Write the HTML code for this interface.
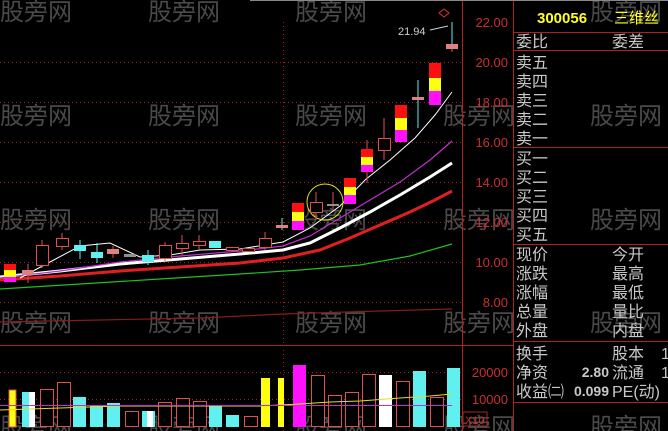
<!DOCTYPE html>
<html><head><meta charset="utf-8"><style>
html,body{margin:0;padding:0;background:#000;width:668px;height:431px;overflow:hidden}
svg{display:block}
text{font-family:"Liberation Sans","Noto Sans CJK SC",sans-serif}
.wm{fill:#4a4a4a;font-size:24px}
.ax{fill:#c83030;font-size:13px}
.lb{fill:#c8c8c8;font-size:16px}
</style></head><body>
<svg width="668" height="431" viewBox="0 0 668 431">
<rect width="668" height="431" fill="#000"/>
<!-- watermarks -->
<g class="wm">
<text x="0" y="20">股旁网</text><text x="148" y="20">股旁网</text><text x="295" y="20">股旁网</text><text x="590" y="20">股旁网</text>
<text x="0" y="124">股旁网</text><text x="148" y="124">股旁网</text><text x="295" y="124">股旁网</text><text x="443" y="124">股旁网</text><text x="590" y="124">股旁网</text>
<text x="0" y="228">股旁网</text><text x="148" y="228">股旁网</text><text x="295" y="228">股旁网</text><text x="443" y="228">股旁网</text><text x="590" y="228">股旁网</text>
<text x="0" y="331">股旁网</text><text x="148" y="331">股旁网</text><text x="295" y="331">股旁网</text><text x="443" y="331">股旁网</text><text x="590" y="331">股旁网</text>
<text x="0" y="435">股旁网</text><text x="148" y="435">股旁网</text><text x="295" y="435">股旁网</text><text x="443" y="435">股旁网</text><text x="590" y="435">股旁网</text>
</g>
<!-- grid -->
<g stroke="#a02020" stroke-width="1" stroke-dasharray="1,3">
<line x1="0" y1="62.5" x2="462" y2="62.5"/><line x1="0" y1="102.5" x2="462" y2="102.5"/><line x1="0" y1="142.5" x2="462" y2="142.5"/><line x1="0" y1="182.5" x2="462" y2="182.5"/><line x1="0" y1="222.5" x2="462" y2="222.5"/><line x1="0" y1="262.5" x2="462" y2="262.5"/><line x1="0" y1="302.5" x2="462" y2="302.5"/>
<line x1="283.5" y1="22" x2="283.5" y2="345"/>
<line x1="283.5" y1="350" x2="283.5" y2="431"/>
<line x1="0" y1="372.5" x2="462" y2="372.5"/><line x1="0" y1="399.5" x2="462" y2="399.5"/>
</g>
<g stroke="#b02020" stroke-width="1" fill="none">
<line x1="462.5" y1="0" x2="462.5" y2="431"/>
<line x1="513.5" y1="0" x2="513.5" y2="431"/>
<line x1="0" y1="345.5" x2="513" y2="345.5"/>
<line x1="513" y1="32.5" x2="668" y2="32.5"/>
<line x1="513" y1="50.5" x2="668" y2="50.5"/>
<line x1="513" y1="147.5" x2="668" y2="147.5"/>
<line x1="513" y1="244.5" x2="668" y2="244.5"/>
<line x1="513" y1="341.5" x2="668" y2="341.5"/>
<line x1="513" y1="402.5" x2="668" y2="402.5"/>
<rect x="463" y="412" width="24" height="14"/>
</g>
<line x1="250" y1="0.5" x2="668" y2="0.5" stroke="#888"/>
<!-- axis labels -->
<g class="ax" text-anchor="end">
<text x="508" y="27">22.00</text><text x="508" y="67">20.00</text><text x="508" y="107">18.00</text><text x="508" y="147">16.00</text><text x="508" y="187">14.00</text><text x="508" y="227">12.00</text><text x="508" y="267">10.00</text><text x="508" y="307">8.00</text>
<text x="508" y="377">20000</text><text x="508" y="404">10000</text>
</g>
<text x="465" y="424" fill="#c83030" font-size="11">X10</text>
<!-- MA lines -->
<polyline fill="none" stroke="#8c1a1a" stroke-width="1.2" points="0,322 100,320 200,318 283,314 380,311 452,309"/>
<polyline fill="none" stroke="#20c020" stroke-width="1.2" points="0,289 80,284 160,279 240,274 300,270 360,265 410,256 452,244"/>
<polyline fill="none" stroke="#e02020" stroke-width="3" points="0,280 60,276 120,271 180,267 240,263 283,258 320,250 350,238 380,225 410,212 435,200 452,191"/>
<polyline fill="none" stroke="#ffffff" stroke-width="3" points="0,277 60,271 120,264 180,259 240,254 283,250 310,243 340,228 370,212 400,195 430,177 452,163"/>
<polyline fill="none" stroke="#c030d0" stroke-width="1.2" points="0,278 60,271 120,262 180,256 240,251 283,246 310,236 340,218 370,200 400,182 430,160 452,141"/>
<polyline fill="none" stroke="#ffffff" stroke-width="1" points="20,278 50,262 80,246 110,243 140,257 170,255 200,250 240,249 283,242 310,228 340,206 365,180 390,160 415,138 435,115 452,92"/>
<circle cx="325" cy="202" r="18" fill="none" stroke="#e0e020" stroke-width="1"/>
<!-- candles -->
<g stroke-width="1">
<!-- wicks -->
<g stroke="#e05050">
<line x1="28" y1="264" x2="28" y2="283"/><line x1="42" y1="240" x2="42" y2="268"/><line x1="62" y1="233" x2="62" y2="250"/><line x1="113" y1="246" x2="113" y2="258"/>
<line x1="165" y1="242" x2="165" y2="261"/><line x1="182" y1="235" x2="182" y2="255"/><line x1="199" y1="235" x2="199" y2="250"/><line x1="265" y1="232" x2="265" y2="250"/>
<line x1="316" y1="192" x2="316" y2="220"/><line x1="333" y1="192" x2="333" y2="210"/><line x1="367" y1="140" x2="367" y2="183"/><line x1="384" y1="118" x2="384" y2="160"/><line x1="452" y1="40" x2="452" y2="52"/>
</g>
<g stroke="#60f0f0"><line x1="80" y1="240" x2="80" y2="259"/><line x1="97" y1="243" x2="97" y2="263"/><line x1="148" y1="250" x2="148" y2="265"/><line x1="418" y1="80" x2="418" y2="128"/><line x1="452" y1="22" x2="452" y2="44"/><line x1="282" y1="218" x2="282" y2="230"/></g>
<!-- hollow -->
<g fill="#000" stroke="#e05050">
<rect x="36.5" y="245.5" width="12" height="20"/><rect x="56.5" y="238.5" width="12" height="8"/><rect x="159.5" y="245.5" width="12" height="13"/>
<rect x="176.5" y="243.5" width="12" height="5"/><rect x="193.5" y="241.5" width="12" height="4"/><rect x="226.5" y="247.5" width="12" height="3"/><rect x="242.5" y="248.5" width="12" height="3"/>
<rect x="259.5" y="238.5" width="12" height="9"/><rect x="310.5" y="202.5" width="12" height="10"/><rect x="378.5" y="138.5" width="12" height="12"/>
</g>
<g fill="#e08080" stroke="none">
<rect x="22" y="270" width="12" height="5"/><rect x="107" y="249" width="12" height="5"/><rect x="276" y="225" width="12" height="3"/><rect x="412" y="97" width="12" height="3"/><rect x="446" y="44" width="12" height="5"/>
</g>
<g fill="#909090"><rect x="124" y="254" width="12" height="3"/><rect x="327" y="204" width="12" height="2"/></g>
<g fill="#60f0f0"><rect x="74" y="245" width="12" height="6"/><rect x="91" y="252" width="12" height="6"/><rect x="142" y="255" width="12" height="7"/><rect x="209" y="241" width="12" height="7"/></g>
<!-- tri-color -->
<g>
<rect x="4" y="264" width="12" height="6" fill="#ff1010"/><rect x="4" y="270" width="12" height="7" fill="#ffff10"/><rect x="4" y="277" width="12" height="5" fill="#ff10ff"/>
<rect x="292" y="203" width="12" height="9" fill="#ff1010"/><rect x="292" y="212" width="12" height="9" fill="#ffff10"/><rect x="292" y="221" width="12" height="9" fill="#ff10ff"/>
<rect x="344" y="178" width="12" height="9" fill="#ff1010"/><rect x="344" y="187" width="12" height="8" fill="#ffff10"/><rect x="344" y="195" width="12" height="9" fill="#ff10ff"/>
<rect x="361" y="149" width="12" height="8" fill="#ff1010"/><rect x="361" y="157" width="12" height="8" fill="#ffff10"/><rect x="361" y="165" width="12" height="7" fill="#ff10ff"/>
<rect x="395" y="105" width="12" height="13" fill="#ff1010"/><rect x="395" y="118" width="12" height="12" fill="#ffff10"/><rect x="395" y="130" width="12" height="12" fill="#ff10ff"/>
<rect x="429" y="63" width="12" height="15" fill="#ff1010"/><rect x="429" y="78" width="12" height="13" fill="#ffff10"/><rect x="429" y="91" width="12" height="14" fill="#ff10ff"/>
</g>
</g>
<text x="398" y="35" fill="#d0d0d0" font-size="11">21.94</text>
<polyline points="430,30 448,26" stroke="#d0d0d0" fill="none"/>
<path d="M439,13 L444,9 L449,13 L444,17Z" fill="none" stroke="#e03030"/>
<!-- volume -->
<g stroke-width="1">
<g fill="#000" stroke="#e05050">
<rect x="40.5" y="389.5" width="13" height="37"/><rect x="57.5" y="382.5" width="13" height="44"/><rect x="125.5" y="411.5" width="13" height="15"/>
<rect x="158.5" y="402.5" width="13" height="24"/><rect x="176.5" y="398.5" width="13" height="28"/><rect x="193.5" y="401.5" width="13" height="25"/><rect x="244.5" y="416.5" width="13" height="10"/>
<rect x="311.5" y="375.5" width="13" height="51"/><rect x="328.5" y="395.5" width="13" height="31"/><rect x="345.5" y="392.5" width="13" height="34"/><rect x="362.5" y="374.5" width="13" height="52"/><rect x="396.5" y="381.5" width="13" height="45"/><rect x="430.5" y="397.5" width="13" height="29"/>
</g>
<g fill="#60f0f0"><rect x="22" y="392" width="13" height="35"/><rect x="73" y="397" width="13" height="30"/><rect x="90" y="405" width="13" height="22"/><rect x="107" y="403" width="13" height="24"/><rect x="142" y="411" width="13" height="16"/><rect x="209" y="405" width="13" height="22"/><rect x="226" y="415" width="13" height="12"/><rect x="413" y="371" width="13" height="56"/><rect x="447" y="368" width="13" height="59"/></g>
<rect x="9" y="390" width="7" height="37" fill="#ffff10" stroke="#e05050"/>
<rect x="29" y="392" width="6" height="35" fill="#fff"/>
<rect x="147" y="411" width="6" height="16" fill="#fff"/>
<rect x="261" y="378" width="9" height="49" fill="#ffff10"/><rect x="278" y="378" width="6" height="49" fill="#ffff10"/>
<rect x="293" y="365" width="13" height="62" fill="#ff10ff"/>
<rect x="379" y="375" width="13" height="52" fill="#fff"/>
</g>
<polyline fill="none" stroke="#e0e020" points="0,410 60,408 120,406 200,406 260,406 300,404 330,402 360,401 400,398 430,396 452,394"/>
<line x1="0" y1="405.5" x2="452" y2="405.5" stroke="#c030d0"/>
<!-- right panel -->
<text x="537" y="23" fill="#ffff20" font-size="15" font-weight="bold">300056</text>
<text x="614" y="23" fill="#ffff20" font-size="15">三维丝</text>
<g class="lb">
<text x="516" y="47">委比</text><text x="612" y="47">委差</text>
<text x="516" y="68">卖五</text><text x="516" y="87">卖四</text><text x="516" y="106">卖三</text><text x="516" y="125">卖二</text><text x="516" y="144">卖一</text>
<text x="516" y="164">买一</text><text x="516" y="183">买二</text><text x="516" y="202">买三</text><text x="516" y="221">买四</text><text x="516" y="240">买五</text>
<text x="516" y="260">现价</text><text x="612" y="260">今开</text>
<text x="516" y="279">涨跌</text><text x="612" y="279">最高</text>
<text x="516" y="298">涨幅</text><text x="612" y="298">最低</text>
<text x="516" y="317">总量</text><text x="612" y="317">量比</text>
<text x="516" y="336">外盘</text><text x="612" y="336">内盘</text>
<text x="516" y="359">换手</text><text x="612" y="359">股本</text><text x="661" y="359">1</text>
<text x="516" y="378">净资</text><text x="612" y="378">流通</text><text x="661" y="378">1</text>
<text x="516" y="397">收益㈡</text><text x="612" y="397">PE(动)</text>
</g>
<g fill="#c8c8c8" font-size="14" font-weight="bold" text-anchor="end">
<text x="609" y="377">2.80</text><text x="609" y="396">0.099</text>
</g>
</svg>
</body></html>
